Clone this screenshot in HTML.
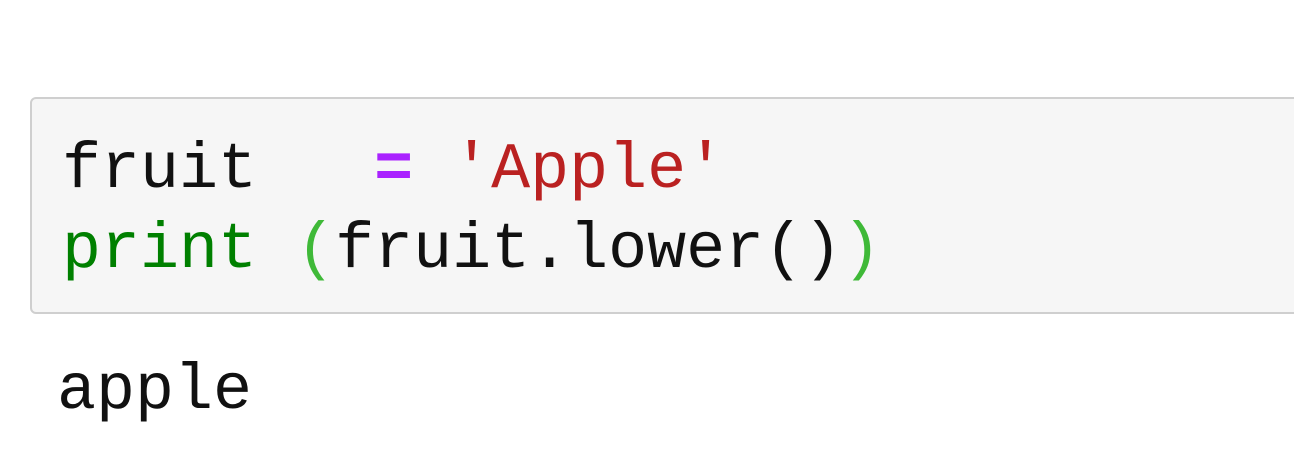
<!DOCTYPE html>
<html><head><style>
body{margin:0;width:1294px;height:464px;background:#fff;overflow:hidden;position:relative;font-family:"Liberation Mono",monospace;}
.box{position:absolute;left:30px;top:97px;width:1280px;height:213px;background:#f6f6f6;border:2px solid #cfcfcf;border-radius:6px;}
.l{position:absolute;font-size:65px;line-height:1;white-space:pre;color:#111;}
</style></head><body>
<div class="box"></div>
<div class="l" style="left:62px;top:138px">fruit   <span style="color:#aa22ff;font-weight:bold">=</span> <span style="color:#ba2121">'Apple'</span></div>
<div class="l" style="left:62px;top:218px"><span style="color:#008000">print</span> <span style="color:#3fb938">(</span>fruit.lower()<span style="color:#3fb938">)</span></div>
<div class="l" style="left:57px;top:359px">apple</div>
</body></html>
